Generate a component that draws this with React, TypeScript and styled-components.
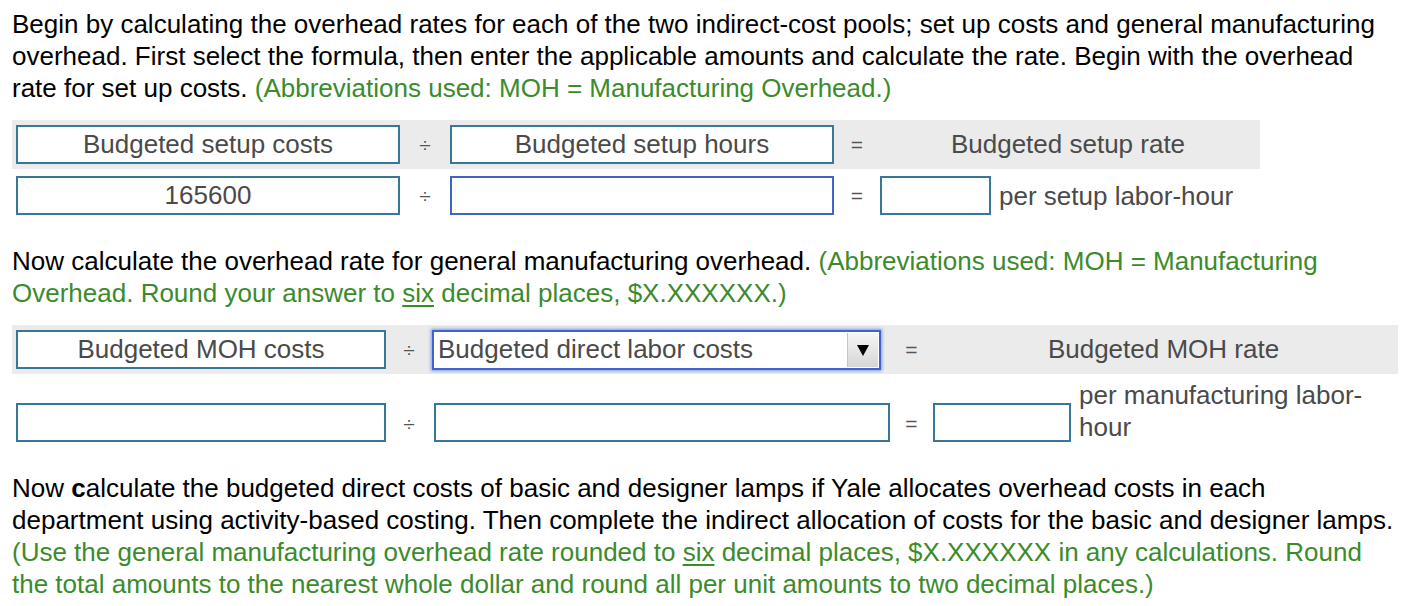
import React from "react";
import styled, { createGlobalStyle } from "styled-components";

const Global = createGlobalStyle`
  html, body { margin: 0; padding: 0; background: #ffffff; }
  body { font-family: "Liberation Sans", Arial, Helvetica, sans-serif; color: #000; }
`;

const TEAL = "#37789a";
const GREEN = "#3b8b2c";

const Page = styled.div`
  width: 1418px;
  padding: 8px 12px 0 12px;
  box-sizing: border-box;
`;

const Para = styled.p<{ $gap?: number }>`
  margin: ${(p) => p.$gap ?? 0}px 0 0 0;
  width: 1384px;
  font-size: 26px;
  line-height: 32px;
  color: #000;
`;

const Hint = styled.span`
  color: ${GREEN};
`;

const U = styled.span`
  text-decoration: underline;
  text-underline-offset: 3px;
`;

const B = styled.b`
  font-weight: bold;
`;

const Table = styled.div<{ $gap: number }>`
  margin-top: ${(p) => p.$gap}px;
  display: flex;
  flex-direction: column;
`;

const Row = styled.div<{ $cols: string; $shaded?: boolean; $align?: string; $gap?: number }>`
  display: grid;
  grid-template-columns: ${(p) => p.$cols};
  align-items: ${(p) => p.$align ?? "center"};
  background: ${(p) => (p.$shaded ? "#ebebeb" : "transparent")};
  min-height: ${(p) => (p.$shaded ? "49px" : "0")};
  margin-top: ${(p) => p.$gap ?? 0}px;
  width: max-content;
`;

const Box = styled.div<{ $w: number; $ml?: number; $focus?: boolean; $mb?: number }>`
  box-sizing: border-box;
  width: ${(p) => p.$w}px;
  height: 39px;
  margin-left: ${(p) => p.$ml ?? 4}px;
  margin-bottom: ${(p) => p.$mb ?? 0}px;
  border: 2px solid ${(p) => (p.$focus ? "#3f63c9" : TEAL)};
  background: #fff;
  display: flex;
  align-items: center;
  justify-content: center;
  font-size: 26px;
  color: #4a4a4a;
`;

const Op = styled.div<{ $h?: number }>`
  height: ${(p) => p.$h ?? 39}px;
  display: flex;
  align-items: center;
  justify-content: center;
  font-size: 21px;
  color: #555;
`;

const Heading = styled.div`
  text-align: center;
  font-size: 26px;
  color: #4a4a4a;
`;

const Result = styled.div`
  display: flex;
  align-items: center;
  gap: 8px;
`;

const ResultEnd = styled.div`
  display: flex;
  align-items: flex-end;
  gap: 8px;
`;

const Unit = styled.div<{ $w?: number }>`
  font-size: 26px;
  line-height: 32px;
  color: #4a4a4a;
  width: ${(p) => (p.$w ? `${p.$w}px` : "auto")};
`;

const Select = styled.div`
  box-sizing: border-box;
  width: 449px;
  height: 40px;
  margin-left: 4px;
  border: 2px solid #3e64d2;
  box-shadow: 0 0 3px 1px rgba(70, 110, 220, 0.65);
  background: #fff;
  display: flex;
  align-items: stretch;
`;

const SelectText = styled.div`
  flex: 1;
  display: flex;
  align-items: center;
  padding-left: 4px;
  font-size: 26px;
  color: #4a4a4a;
`;

const SelectArrow = styled.div`
  width: 30px;
  margin: 1px 1px 1px 0;
  background: linear-gradient(#f6f6f6, #d6d6d6);
  border-left: 1px solid #c4c4c4;
  display: flex;
  align-items: center;
  justify-content: center;
`;

const T1 = "392px 42px 392px 38px 384px";
const T2 = "378px 38px 466px 35px 469px";

export default function App() {
  return (
    <>
      <Global />
      <Page>
        <Para>
          Begin by calculating the overhead rates for each of the two indirect-cost pools; set up costs and general manufacturing
          overhead. First select the formula, then enter the applicable amounts and calculate the rate. Begin with the overhead
          rate for set up costs. <Hint>(Abbreviations used: MOH = Manufacturing Overhead.)</Hint>
        </Para>

        <Table $gap={16}>
          <Row $cols={T1} $shaded>
            <Box $w={384}>Budgeted setup costs</Box>
            <Op>÷</Op>
            <Box $w={384}>Budgeted setup hours</Box>
            <Op>=</Op>
            <Heading>Budgeted setup rate</Heading>
          </Row>
          <Row $cols={T1} $gap={7}>
            <Box $w={384}>165600</Box>
            <Op>÷</Op>
            <Box $w={384} $focus />
            <Op>=</Op>
            <Result>
              <Box $w={111} />
              <Unit>per setup labor-hour</Unit>
            </Result>
          </Row>
        </Table>

        <Para $gap={30}>
          Now calculate the overhead rate for general manufacturing overhead.{" "}
          <Hint>
            (Abbreviations used: MOH = Manufacturing Overhead. Round your answer to <U>six</U> decimal places, $X.XXXXXX.)
          </Hint>
        </Para>

        <Table $gap={16}>
          <Row $cols={T2} $shaded>
            <Box $w={370}>Budgeted MOH costs</Box>
            <Op>÷</Op>
            <Select>
              <SelectText>Budgeted direct labor costs</SelectText>
              <SelectArrow>
                <svg width="14" height="16" viewBox="0 0 14 16">
                  <polygon points="1,3 13,3 7,14" fill="#000" />
                </svg>
              </SelectArrow>
            </Select>
            <Op>=</Op>
            <Heading>Budgeted MOH rate</Heading>
          </Row>
          <Row $cols={T2} $align="end" $gap={5}>
            <Box $w={370} $mb={1} />
            <Op>÷</Op>
            <Box $w={456} $ml={6} $mb={1} />
            <Op>=</Op>
            <ResultEnd>
              <Box $w={138} $mb={1} />
              <Unit $w={318}>per manufacturing labor-hour</Unit>
            </ResultEnd>
          </Row>
        </Table>

        <Para $gap={29}>
          Now <B>c</B>alculate the budgeted direct costs of basic and designer lamps if Yale allocates overhead costs in each
          department using activity-based costing. Then complete the indirect allocation of costs for the basic and designer lamps.{" "}
          <Hint>
            (Use the general manufacturing overhead rate rounded to <U>six</U> decimal places, $X.XXXXXX in any calculations. Round
            the total amounts to the nearest whole dollar and round all per unit amounts to two decimal places.)
          </Hint>
        </Para>
      </Page>
    </>
  );
}
